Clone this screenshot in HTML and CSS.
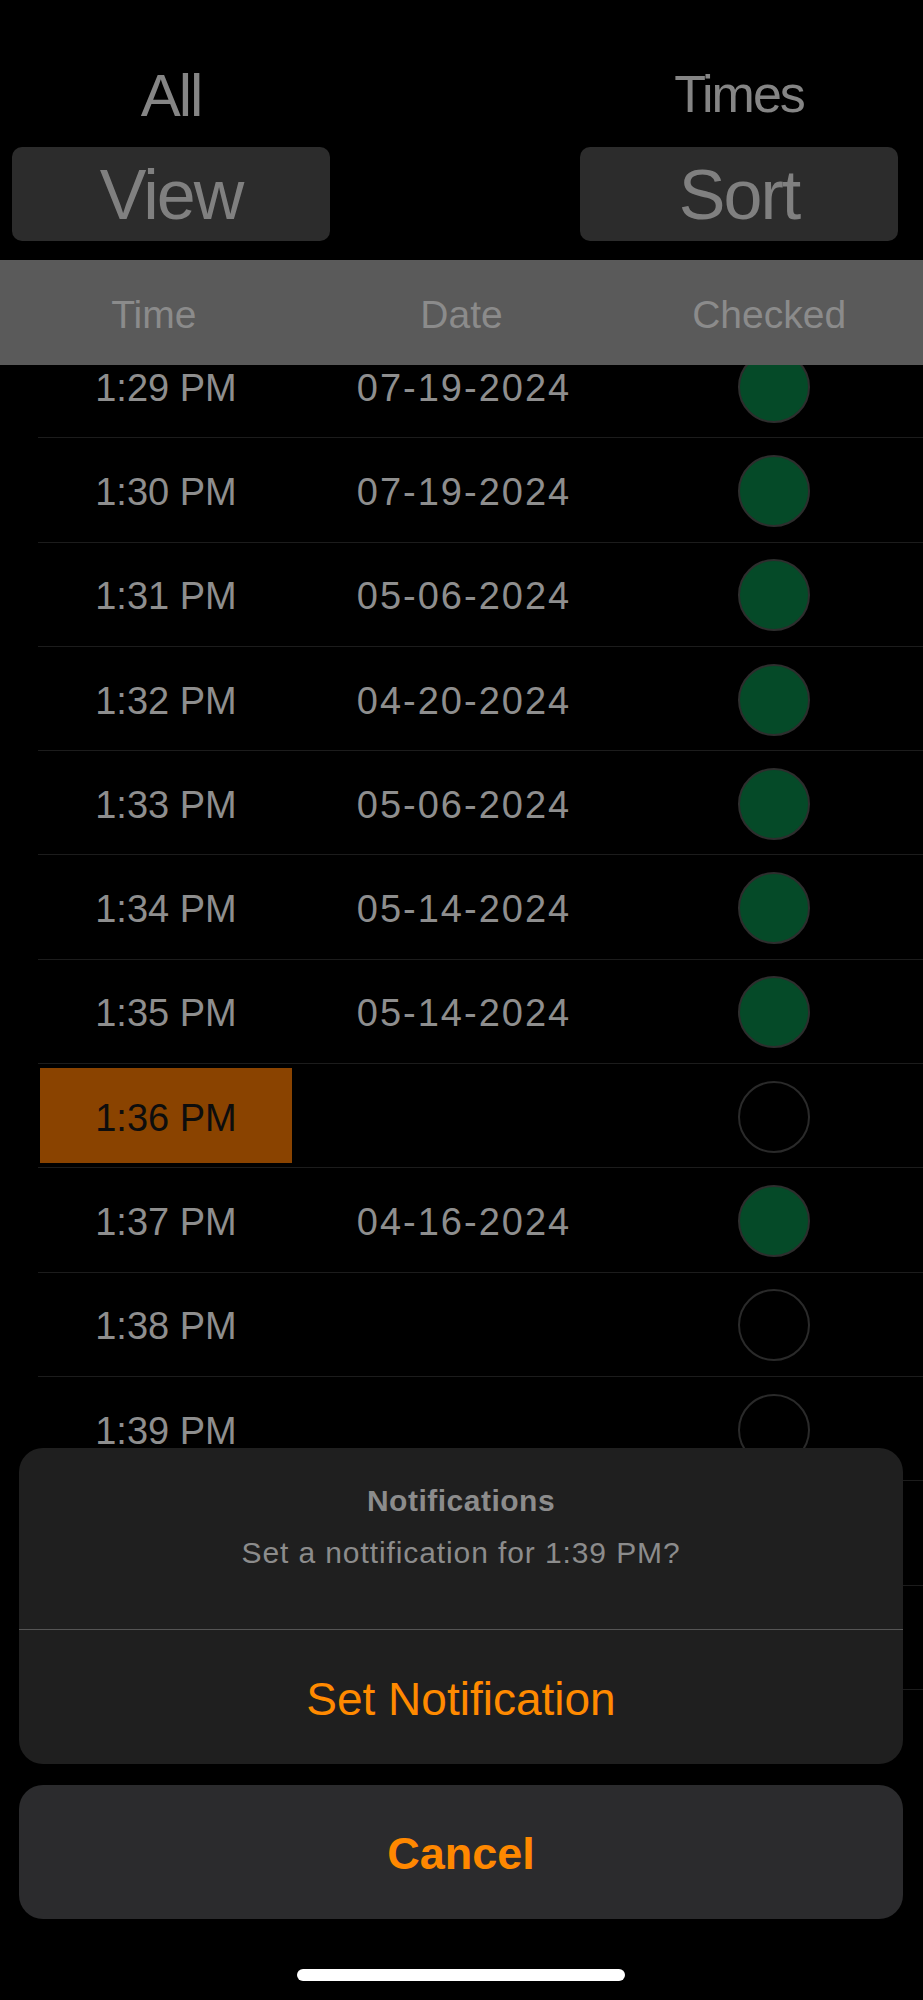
FILE: index.html
```html
<!DOCTYPE html>
<html lang="en">
<head>
    <meta charset="UTF-8">
    <meta name="viewport" content="width=device-width, initial-scale=1.0">
    <title>Times</title>
    <link rel="stylesheet" href="styles.css">
</head>
<body>

    <!-- Top controls -->
    <div class="top">
        <div class="col">
            <div class="label label-all">All</div>
            <button class="big-btn">View</button>
        </div>
        <div class="col">
            <div class="label label-times">Times</div>
            <button class="big-btn">Sort</button>
        </div>
    </div>

    <!-- Column titles -->
    <div class="head">
        <div>Time</div>
        <div>Date</div>
        <div>Checked</div>
    </div>

    <!-- Time list -->
    <div class="list">
        <div class="row"><div class="cell">1:29 PM</div><div class="cell date">07-19-2024</div><div class="check"><span class="dot done"></span></div></div>
        <div class="row"><div class="cell">1:30 PM</div><div class="cell date">07-19-2024</div><div class="check"><span class="dot done"></span></div></div>
        <div class="row"><div class="cell">1:31 PM</div><div class="cell date">05-06-2024</div><div class="check"><span class="dot done"></span></div></div>
        <div class="row"><div class="cell">1:32 PM</div><div class="cell date">04-20-2024</div><div class="check"><span class="dot done"></span></div></div>
        <div class="row"><div class="cell">1:33 PM</div><div class="cell date">05-06-2024</div><div class="check"><span class="dot done"></span></div></div>
        <div class="row"><div class="cell">1:34 PM</div><div class="cell date">05-14-2024</div><div class="check"><span class="dot done"></span></div></div>
        <div class="row"><div class="cell">1:35 PM</div><div class="cell date">05-14-2024</div><div class="check"><span class="dot done"></span></div></div>
        <div class="row"><div class="cell current">1:36 PM</div><div class="cell date"></div><div class="check"><span class="dot"></span></div></div>
        <div class="row"><div class="cell">1:37 PM</div><div class="cell date">04-16-2024</div><div class="check"><span class="dot done"></span></div></div>
        <div class="row"><div class="cell">1:38 PM</div><div class="cell date"></div><div class="check"><span class="dot"></span></div></div>
        <div class="row"><div class="cell">1:39 PM</div><div class="cell date"></div><div class="check"><span class="dot"></span></div></div>
        <div class="row"><div class="cell">1:40 PM</div><div class="cell date"></div><div class="check"><span class="dot"></span></div></div>
        <div class="row"><div class="cell">1:41 PM</div><div class="cell date"></div><div class="check"><span class="dot"></span></div></div>
    </div>

    <!-- Action sheet -->
    <div class="sheet">
        <div class="sheet-group">
            <div class="sheet-info">
                <div class="sheet-title">Notifications</div>
                <div class="sheet-msg">Set a nottification for 1:39 PM?</div>
            </div>
            <div class="sheet-action">Set Notification</div>
        </div>
        <div class="sheet-cancel">Cancel</div>
        <div class="home-bar"></div>
    </div>

</body>
</html>
```

FILE: styles.css
```css
body, html {
    margin: 0;
    padding: 0;
    background: #000;
    font-family: "Liberation Sans", Arial, sans-serif;
}
body {
    min-height: 2000px;
}
/* Top controls */
.top {
    display: flex;
    justify-content: space-between;
    padding: 66px 25px 0 12px;
}
.col {
    width: 318px;
    display: flex;
    flex-direction: column;
    align-items: center;
}
.label {
    height: 60px;
    margin-bottom: 21px;
    color: #858585;
    letter-spacing: -2px;
}
.label-all {
    font-size: 60px;
    line-height: 60px;
}
.label-times {
    font-size: 52px;
    line-height: 56px;
}
.big-btn {
    width: 100%;
    height: 94px;
    box-sizing: border-box;
    padding: 2px 0 0 0;
    border: none;
    border-radius: 10px;
    background: #2c2c2c;
    color: #808080;
    font-family: inherit;
    font-size: 70px;
    line-height: 92px;
    letter-spacing: -2px;
}
/* Column titles */
.head {
    position: relative;
    z-index: 1;
    margin-top: 19px;
    height: 105px;
    box-sizing: border-box;
    padding-top: 4px;
    display: grid;
    grid-template-columns: 1fr 1fr 1fr;
    background: #5a5a5a;
    color: #8b8b8b;
    font-size: 39px;
    line-height: 101px;
    text-align: center;
}
/* Rows */
.list {
    margin-top: -31px;
}
.row {
    margin-left: 38px;
    height: 104.3px;
    box-sizing: border-box;
    border-bottom: 1px solid #1c1c1c;
    display: grid;
    grid-template-columns: 256px 340px 279px;
    align-items: center;
}
.cell {
    text-align: center;
    color: #8e8e8e;
    font-size: 38px;
    line-height: 38px;
    padding-top: 4px;
}
.date {
    letter-spacing: 2px;
}
.cell.current {
    align-self: stretch;
    margin: 4px 2px;
    padding-top: 4px;
    display: flex;
    align-items: center;
    justify-content: center;
    background: #8a4300;
    color: #0d0d0d;
}
.check {
    display: flex;
    justify-content: center;
    padding-top: 2px;
}
.dot {
    width: 72px;
    height: 72px;
    box-sizing: border-box;
    border-radius: 50%;
    border: 2px solid #2a2a2a;
}
.dot.done {
    background: #054a28;
    border-color: #2e2e2e;
}
/* Action sheet */
.sheet {
    position: absolute;
    top: 1448px;
    left: 19px;
    width: 884px;
    display: flex;
    flex-direction: column;
}
.sheet-group {
    background: #1f1f1f;
    border-radius: 24px;
    overflow: hidden;
}
.sheet-info {
    height: 182px;
    box-sizing: border-box;
    padding-top: 35px;
    border-bottom: 1px solid #555;
    text-align: center;
    color: #8c8c8c;
}
.sheet-title {
    font-size: 30px;
    font-weight: bold;
    line-height: 36px;
    letter-spacing: 0.5px;
}
.sheet-msg {
    margin-top: 16px;
    font-size: 30px;
    line-height: 36px;
    letter-spacing: 0.9px;
}
.sheet-action {
    height: 134px;
    box-sizing: border-box;
    padding-top: 3px;
    display: flex;
    align-items: center;
    justify-content: center;
    color: #ff8a00;
    font-size: 46px;
}
.sheet-cancel {
    margin-top: 21px;
    height: 134px;
    box-sizing: border-box;
    padding-top: 3px;
    display: flex;
    align-items: center;
    justify-content: center;
    background: #2b2b2d;
    border-radius: 24px;
    color: #ff8800;
    font-size: 45px;
    font-weight: bold;
}
.home-bar {
    align-self: center;
    margin-top: 50px;
    width: 328px;
    height: 12px;
    border-radius: 6px;
    background: #fff;
}
```
